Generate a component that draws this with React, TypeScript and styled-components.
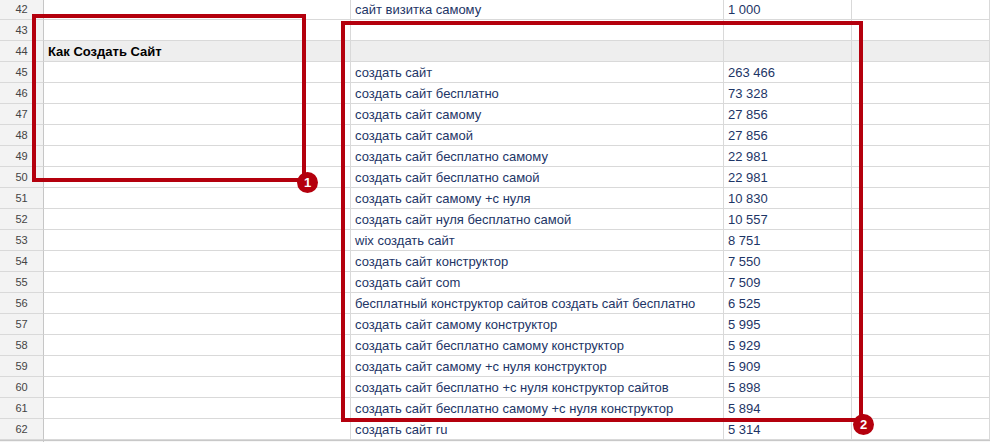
import React from "react";
import styled, { createGlobalStyle } from "styled-components";

const GlobalStyle = createGlobalStyle`
  html, body { margin: 0; padding: 0; background: #ffffff; }
  body { font-family: "Liberation Sans", Arial, sans-serif; }
`;

const Page = styled.div`
  position: relative;
  width: 990px;
  height: 442px;
  overflow: hidden;
  background: #ffffff;
`;

const Sheet = styled.div`
  display: flex;
  flex-direction: column;
  margin-top: -1px;
`;

const Row = styled.div<{ $band?: boolean }>`
  display: grid;
  grid-template-columns: 44px 307px 373px 128px 1fr;
  height: 21px;
  background: ${(p) => (p.$band ? "#eeeeee" : "#ffffff")};
`;

const Cell = styled.div<{ $bold?: boolean }>`
  box-sizing: border-box;
  height: 21px;
  border-right: 1px solid #d9d9d9;
  border-bottom: 1px solid #d9d9d9;
  padding: 0 4px 0 4px;
  display: flex;
  align-items: center;
  font-size: 13px;
  white-space: nowrap;
  overflow: hidden;
  color: ${(p) => (p.$bold ? "#000000" : "#1d3566")};
  font-weight: ${(p) => (p.$bold ? 700 : 400)};
`;

const HeadCell = styled.div`
  box-sizing: border-box;
  height: 21px;
  background: #f3f3f3;
  border-right: 1px solid #c6c6c6;
  border-bottom: 1px solid #d9d9d9;
  display: flex;
  align-items: center;
  justify-content: center;
  font-size: 11px;
  color: #444444;
`;

const Footer = styled.div`
  display: grid;
  grid-template-columns: 44px 1fr;
  height: 4px;
  border-top: 1px solid #c8c8c8;
`;

const FooterHead = styled.div`
  background: #f3f3f3;
  border-right: 1px solid #c6c6c6;
`;

const FooterFill = styled.div`
  background: #f7f7f7;
`;

const Frame = styled.div<{ $l: number; $t: number; $w: number; $h: number }>`
  position: absolute;
  box-sizing: border-box;
  left: ${(p) => p.$l}px;
  top: ${(p) => p.$t}px;
  width: ${(p) => p.$w}px;
  height: ${(p) => p.$h}px;
  border: 4px solid #b4000d;
  pointer-events: none;
`;

const Badge = styled.div<{ $l: number; $t: number }>`
  position: absolute;
  left: ${(p) => p.$l}px;
  top: ${(p) => p.$t}px;
  width: 21px;
  height: 21px;
  border-radius: 50%;
  background: #b4000d;
  color: #ffffff;
  font-weight: 700;
  font-size: 13px;
  display: flex;
  align-items: center;
  justify-content: center;
  line-height: 1;
`;

type RowData = { n: number; b?: string; c?: string; d?: string; band?: boolean };

const rows: RowData[] = [
  { n: 42, c: "сайт визитка самому", d: "1 000" },
  { n: 43 },
  { n: 44, b: "Как Создать Сайт", band: true },
  { n: 45, c: "создать сайт", d: "263 466" },
  { n: 46, c: "создать сайт бесплатно", d: "73 328" },
  { n: 47, c: "создать сайт самому", d: "27 856" },
  { n: 48, c: "создать сайт самой", d: "27 856" },
  { n: 49, c: "создать сайт бесплатно самому", d: "22 981" },
  { n: 50, c: "создать сайт бесплатно самой", d: "22 981" },
  { n: 51, c: "создать сайт самому +с нуля", d: "10 830" },
  { n: 52, c: "создать сайт нуля бесплатно самой", d: "10 557" },
  { n: 53, c: "wix создать сайт", d: "8 751" },
  { n: 54, c: "создать сайт конструктор", d: "7 550" },
  { n: 55, c: "создать сайт com", d: "7 509" },
  { n: 56, c: "бесплатный конструктор сайтов создать сайт бесплатно", d: "6 525" },
  { n: 57, c: "создать сайт самому конструктор", d: "5 995" },
  { n: 58, c: "создать сайт бесплатно самому конструктор", d: "5 929" },
  { n: 59, c: "создать сайт самому +с нуля конструктор", d: "5 909" },
  { n: 60, c: "создать сайт бесплатно +с нуля конструктор сайтов", d: "5 898" },
  { n: 61, c: "создать сайт бесплатно самому +с нуля конструктор", d: "5 894" },
  { n: 62, c: "создать сайт ru", d: "5 314" },
];

export default function App() {
  return (
    <Page>
      <GlobalStyle />
      <Sheet>
        {rows.map((r) => (
          <Row key={r.n} $band={r.band}>
            <HeadCell>{r.n}</HeadCell>
            <Cell $bold={!!r.b}>{r.b}</Cell>
            <Cell>{r.c}</Cell>
            <Cell>{r.d}</Cell>
            <Cell />
          </Row>
        ))}
        <Footer>
          <FooterHead />
          <FooterFill />
        </Footer>
      </Sheet>
      <Frame $l={32} $t={14} $w={274} $h={168} />
      <Frame $l={341} $t={21} $w={522} $h={401} />
      <Badge $l={297} $t={172}>1</Badge>
      <Badge $l={853} $t={414}>2</Badge>
    </Page>
  );
}
